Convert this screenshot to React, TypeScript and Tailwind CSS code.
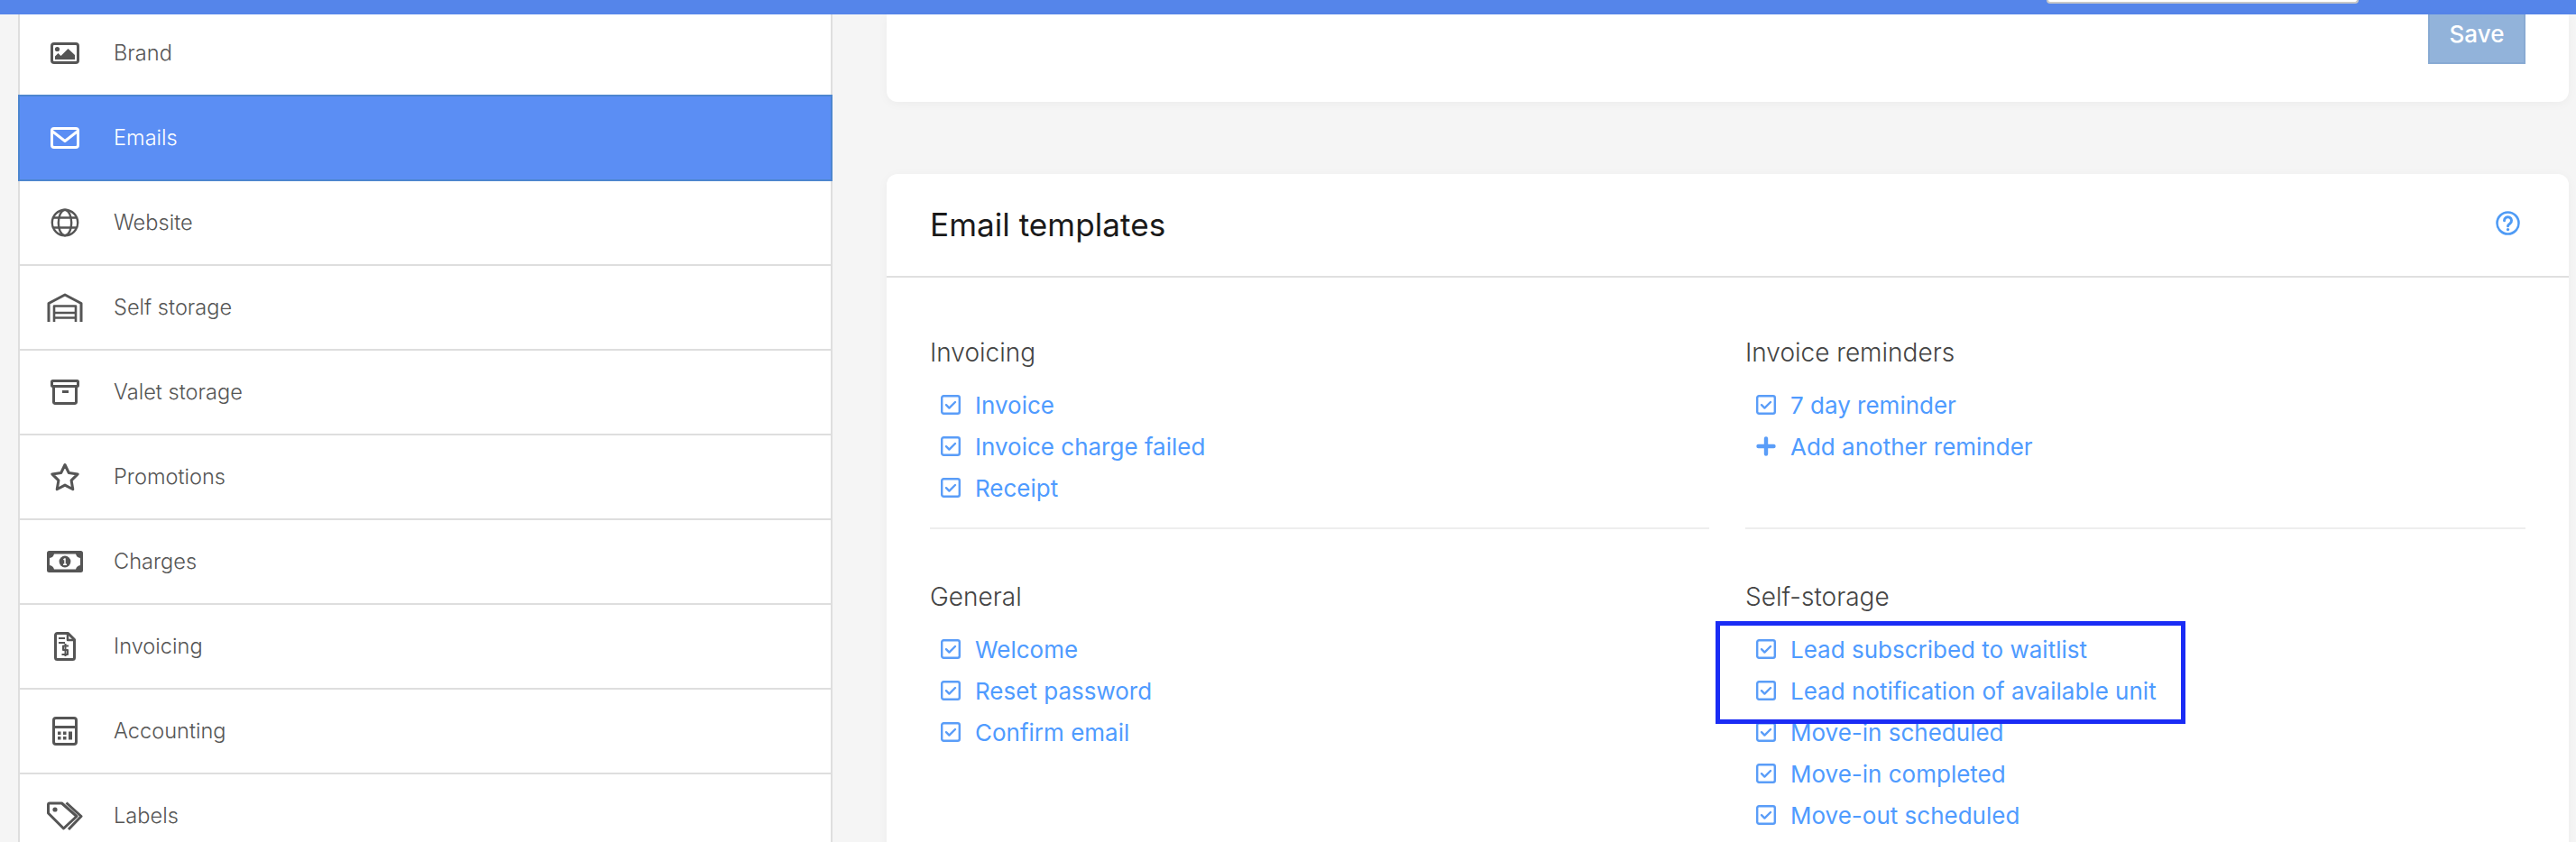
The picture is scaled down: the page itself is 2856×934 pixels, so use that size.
import type { ReactNode } from "react";

const ink = "#555555";

function Icon({ w, h, color = ink, children }: { w: number; h: number; color?: string; children: ReactNode }) {
  return (
    <svg
      width={w}
      height={h}
      viewBox={`0 0 ${w} ${h}`}
      fill="none"
      stroke={color}
      strokeWidth="3"
      strokeLinejoin="round"
      className="shrink-0"
    >
      {children}
    </svg>
  );
}

const BrandIcon = () => (
  <Icon w={32} h={24}>
    <rect x="1.5" y="1.5" width="29" height="21" rx="2.5" />
    <circle cx="7.5" cy="7.5" r="2.6" fill={ink} stroke="none" />
    <path d="M5 19v-3.5l3.5-3.5 3 3 8-8 7.5 7v5z" fill={ink} stroke="none" />
  </Icon>
);

const MailIcon = () => (
  <Icon w={32} h={24} color="#ffffff">
    <rect x="1.5" y="1.5" width="29" height="21" rx="2.5" />
    <path d="M2.5 5 16 15.5 29.5 5" />
  </Icon>
);

const GlobeIcon = () => (
  <Icon w={32} h={32}>
    <g strokeWidth="2.4">
      <circle cx="16" cy="16" r="14.2" />
      <ellipse cx="16" cy="16" rx="7.2" ry="14.2" />
      <path d="M3 10.5h26M3 21.5h26" />
    </g>
  </Icon>
);

const GarageIcon = () => (
  <Icon w={40} h={32}>
    <path d="M2 32V11.5L20 2l18 9.5V32" />
    <path d="M8 32V14.5h24V32M8 22h24M8 27.5h24" strokeWidth="2.6" />
  </Icon>
);

const BoxIcon = () => (
  <Icon w={32} h={28}>
    <rect x="1.5" y="1.5" width="29" height="6" rx="1" />
    <path d="M3.5 7.5V25a1.5 1.5 0 0 0 1.5 1.5h22a1.5 1.5 0 0 0 1.5-1.5V7.5" />
    <path d="M13 13.5h7" />
  </Icon>
);

const StarIcon = () => (
  <Icon w={34} h={32}>
    <path d="M17 2.5l4.3 9 9.9 1.4-7.1 7 1.7 9.9L17 25.1l-8.8 4.7 1.7-9.9-7.1-7 9.9-1.4z" />
  </Icon>
);

const MoneyIcon = () => (
  <Icon w={40} h={24}>
    <rect width="40" height="24" rx="2.5" fill={ink} stroke="none" />
    <path d="M8 3.5h24q1 4 5 4.5v8q-4 .5-5 4.5H8q-1-4-5-4.5V8q4-.5 5-4.5z" fill="#ffffff" stroke="none" />
    <circle cx="20" cy="12" r="6.4" fill={ink} stroke="none" />
    <path d="M18.4 9.8 20 8.8V15M18 15.2h4" stroke="#ffffff" strokeWidth="1.5" />
  </Icon>
);

const InvoiceIcon = () => (
  <Icon w={24} h={32}>
    <path d="M3.5 1.5h12l7 7v20a2 2 0 0 1-2 2h-17a2 2 0 0 1-2-2v-25a2 2 0 0 1 2-2z" />
    <path d="M15 2v7h7" strokeWidth="2.5" />
    <path d="M5 7h7M5 12h7" strokeWidth="2.2" />
    <path d="M16 15.5H10V20h5v5H8.5M12.5 13v14" strokeWidth="2" />
  </Icon>
);

const CalcIcon = () => (
  <Icon w={28} h={32}>
    <rect x="1.5" y="1.5" width="25" height="29" rx="2.5" />
    <path d="M2 11.5h24" />
    <path
      d="M6 16.5h3.5V20H6zM12 16.5h3.5V20H12zM18 16.5h4V25.5h-4zM6 22h3.5v3.5H6zM12 22h3.5v3.5H12z"
      fill={ink}
      stroke="none"
    />
  </Icon>
);

const TagIcon = () => (
  <Icon w={40} h={32}>
    <path d="M1.5 3.5A1.5 1.5 0 0 1 3 2h13.5l16.5 14.5L18.5 30 1.5 13z" />
    <path d="M21.5 1.5 38 16.5 24 31" />
    <circle cx="9" cy="9" r="2.6" fill={ink} stroke="none" />
  </Icon>
);

const navItems = [
  { label: "Website", icon: <GlobeIcon /> },
  { label: "Self storage", icon: <GarageIcon /> },
  { label: "Valet storage", icon: <BoxIcon /> },
  { label: "Promotions", icon: <StarIcon /> },
  { label: "Charges", icon: <MoneyIcon /> },
  { label: "Invoicing", icon: <InvoiceIcon /> },
  { label: "Accounting", icon: <CalcIcon /> },
];

function NavIcon({ children }: { children: ReactNode }) {
  return <span className="flex w-10 shrink-0 items-center justify-center">{children}</span>;
}

function Sidebar() {
  return (
    <nav className="ml-[20px] w-[903px] shrink-0 text-[23.6px] font-light text-[#555555]">
      {/* cut off by the top bar */}
      <div className="flex h-[89px] items-center gap-[34px] border-x-2 border-[#dedede] bg-white pb-[3px] pl-[30px]">
        <NavIcon>
          <BrandIcon />
        </NavIcon>
        <span>Brand</span>
      </div>
      <div className="flex h-[96px] items-center gap-[34px] border-2 border-[#4d86cf] bg-[#5b8ef4] pl-[30px] text-white">
        <NavIcon>
          <MailIcon />
        </NavIcon>
        <span>Emails</span>
      </div>
      {navItems.map((item) => (
        <div
          key={item.label}
          className="flex h-[94px] items-center gap-[34px] border-x-2 border-b-2 border-[#dedede] bg-white pl-[30px]"
        >
          <NavIcon>{item.icon}</NavIcon>
          <span>{item.label}</span>
        </div>
      ))}
      <div className="flex h-[94px] items-center gap-[34px] border-x-2 border-[#dedede] bg-white pb-[3px] pl-[30px]">
        <NavIcon>
          <TagIcon />
        </NavIcon>
        <span>Labels</span>
      </div>
    </nav>
  );
}

function CheckIcon() {
  return (
    <svg width="24" height="24" viewBox="0 0 24 24" fill="none" stroke="#5a9df8" strokeWidth="2.4" strokeLinejoin="round" className="shrink-0">
      <rect x="2.2" y="2.2" width="19.6" height="19.6" rx="2" />
      <path d="M7 12.2l3.4 3.4L17 9" strokeLinecap="round" />
    </svg>
  );
}

function PlusIcon() {
  return (
    <svg width="24" height="24" viewBox="0 0 24 24" fill="none" stroke="#5a9df8" strokeWidth="4.4" strokeLinecap="round" className="shrink-0">
      <path d="M12 3.5v17M3.5 12h17" />
    </svg>
  );
}

function TemplateLink({ label, plus }: { label: string; plus?: boolean }) {
  return (
    <a className="flex h-[46px] items-center gap-[15px] pl-[11px] text-[26px] text-[#4f9bff]">
      {plus ? <PlusIcon /> : <CheckIcon />}
      <span>{label}</span>
    </a>
  );
}

function TemplateGroup({ title, links, last }: { title: string; links: string[]; last?: boolean }) {
  return (
    <div className={last ? "pt-[54px]" : "border-b-2 border-[#eeeeee] pb-[21px]"}>
      <h3 className="mb-[14px] h-[42px] text-[28px] leading-[42px] font-light text-[#444444]">{title}</h3>
      {links.map((l) => (
        <TemplateLink key={l} label={l} plus={l === "Add another reminder"} />
      ))}
    </div>
  );
}

export default function App() {
  return (
    <div className="flex h-screen flex-col overflow-hidden bg-[#f5f5f5] font-['Inter',sans-serif]">
      {/* top bar, search box just peeking in */}
      <div className="flex h-4 shrink-0 justify-end bg-[#5585ea] pr-[241px]">
        <div className="h-[4px] w-[346px] rounded-b-[4px] border-x-2 border-b-2 border-[#c8c8c8] bg-white" />
      </div>

      <div className="relative flex min-h-0 flex-1">
        <Sidebar />

        <main className="ml-[60px] w-[1865px] shrink-0">
          <div className="flex h-[97px] justify-end rounded-b-xl bg-white pr-[48px] shadow-[0_2px_12px_rgba(0,0,0,0.04)]">
            <button className="h-[55px] w-[108px] border-x-2 border-b-2 border-[#88aad3] bg-[#92b3da] pb-[11px] text-[26px] font-medium text-white">
              Save
            </button>
          </div>

          <div className="mt-[80px] rounded-t-xl bg-white pb-10 shadow-[0_2px_12px_rgba(0,0,0,0.04)]">
            <div className="flex h-[115px] items-center justify-between border-b-2 border-[#e0e0e0] pr-[54px] pl-[48px]">
              <h2 className="text-[35.2px] text-[#1a1a1a]">Email templates</h2>
              <svg width="27" height="27" viewBox="0 0 27 27" fill="none" stroke="#4f9bf5" strokeWidth="2.6" strokeLinecap="round" className="mb-1">
                <circle cx="13.5" cy="13.5" r="12" />
                <path d="M9.5 10.8a4 4 0 1 1 6.3 3.2c-1.4.9-2.3 1.5-2.3 2.8" strokeWidth="3" />
                <circle cx="13.5" cy="20.6" r="1.7" fill="#4f9bf5" stroke="none" />
              </svg>
            </div>
            <div className="grid grid-cols-[864px_865px] gap-x-10 pt-[62px] pl-[48px]">
              <TemplateGroup title="Invoicing" links={["Invoice", "Invoice charge failed", "Receipt"]} />
              <TemplateGroup title="Invoice reminders" links={["7 day reminder", "Add another reminder"]} />
              <TemplateGroup title="General" links={["Welcome", "Reset password", "Confirm email"]} last />
              <TemplateGroup
                title="Self-storage"
                links={[
                  "Lead subscribed to waitlist",
                  "Lead notification of available unit",
                  "Move-in scheduled",
                  "Move-in completed",
                  "Move-out scheduled",
                ]}
                last
              />
            </div>
          </div>
        </main>

        {/* annotation box drawn over the screenshot */}
        <div className="absolute top-[673px] left-[1902px] h-[114px] w-[521px] border-[5px] border-[#1a2cf5]" />
      </div>
    </div>
  );
}
